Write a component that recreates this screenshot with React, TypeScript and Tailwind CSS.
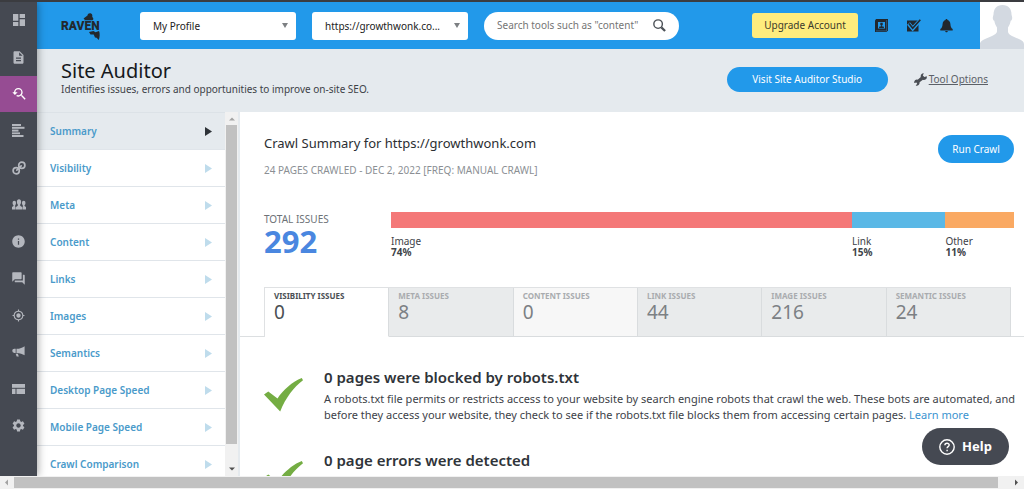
import React, { useState } from 'react';
import {
  MdDashboard,
  MdDescription,
  MdForum,
  MdGpsFixed,
  MdInfo,
  MdSettings,
  MdYoutubeSearchedFor,
} from 'react-icons/md';

const BarsIcon: React.FC = () => (
  <svg viewBox="0 0 13 13" className="w-[13px] h-[13px]" fill="currentColor">
    <rect x="0" y="0" width="9" height="2" />
    <rect x="0" y="2.8" width="12.5" height="2" />
    <rect x="0" y="5.6" width="6.5" height="2" />
    <rect x="0" y="8.4" width="8" height="1.8" />
    <rect x="0" y="11" width="11.5" height="2" />
  </svg>
);

const ChainIcon: React.FC = () => (
  <svg viewBox="0 0 14 14" className="w-[14px] h-[14px]" fill="none" stroke="currentColor" strokeWidth="1.7">
    <circle cx="9.8" cy="4.2" r="3.1" />
    <circle cx="4.2" cy="9.8" r="3.1" />
    <path d="M4.8 9.2l4.4-4.4" strokeLinecap="round" />
  </svg>
);

const PeopleIcon: React.FC = () => (
  <svg viewBox="0 0 14 11" className="w-[14px] h-[11px]" fill="currentColor">
    <ellipse cx="7" cy="3" rx="2.1" ry="2.8" />
    <ellipse cx="2.3" cy="4" rx="1.8" ry="2.3" />
    <ellipse cx="11.7" cy="4" rx="1.8" ry="2.3" />
    <path d="M3.6 10.5V8.3L5.8 6.8V5h2.4v1.8l2.2 1.5v2.2zM0 10.5V8l1.5-1V5.5h1.7v5zM14 10.5V8l-1.500-1V5.500h-1.700v5z" />
  </svg>
);

const MegaphoneIcon: React.FC = () => (
  <svg viewBox="0 0 13 12" className="w-[13px] h-[12px]" fill="currentColor">
    <path d="M4.5 2.8C8 2.8 10.5 1.6 12.6.2v9C10.5 7.9 8 6.9 4.5 6.9z" />
    <path d="M3.700 2.800v4.100H2.300A2 2 0 0 1 2.300 2.800zM3.600 7.700h2.200l1 2.900H4.700z" />
  </svg>
);

const PanelsIcon: React.FC = () => (
  <svg viewBox="0 0 13 10" className="w-[13px] h-[10px]" fill="currentColor">
    <rect width="13" height="3.8" />
    <rect y="4.8" width="3.5" height="5.2" />
    <rect x="4.5" y="4.8" width="8.5" height="5.2" />
  </svg>
);

const WrenchIcon: React.FC = () => (
  <svg viewBox="0 0 13 13" className="w-[13px] h-[13px]" fill="#4a4e54">
    <path d="M9.800.2L8.800 2.400l1.600 1.700 2.300-.9c.4 1.300 0 2.300-.8 3-.9.7-2 .9-3 .5L5.600 9.300c.1 1.200-.3 2-1 2.700-.9.800-1.900.9-2.900.5l1.500-1.700-.8-1.400L.3 10c-.3-1 0-2 .7-2.700.8-.7 1.700-.9 2.700-.6L6.800 4c-.3-1.100 0-2 .6-2.700.6-.8 1.500-1.200 2.400-1.100z" />
  </svg>
);

const rail = [
  { label: 'Dashboard', icon: <MdDashboard className="w-4 h-4" /> },
  { label: 'Reports', icon: <MdDescription className="w-[15px] h-[15px]" /> },
  { label: 'Research', icon: <MdYoutubeSearchedFor className="w-4 h-4" /> },
  { label: 'Rankings', icon: <BarsIcon /> },
  { label: 'Backlinks', icon: <ChainIcon /> },
  { label: 'Audience', icon: <PeopleIcon /> },
  { label: 'Metrics', icon: <MdInfo className="w-[15px] h-[15px]" /> },
  { label: 'Social', icon: <MdForum className="w-[15px] h-[15px]" /> },
  { label: 'Targeting', icon: <MdGpsFixed className="w-[13px] h-[13px]" /> },
  { label: 'Ads', icon: <MegaphoneIcon /> },
  { label: 'Content', icon: <PanelsIcon /> },
  { label: 'Settings', icon: <MdSettings className="w-[15px] h-[15px]" /> },
];

const sections = [
  'Summary',
  'Visibility',
  'Meta',
  'Content',
  'Links',
  'Images',
  'Semantics',
  'Desktop Page Speed',
  'Mobile Page Speed',
  'Crawl Comparison',
];

const breakdown = [
  { name: 'Image', percent: 74, color: 'bg-[#f47878]' },
  { name: 'Link', percent: 15, color: 'bg-[#5ab8e6]' },
  { name: 'Other', percent: 11, color: 'bg-[#faa962]' },
];

const tabs = [
  { name: 'Visibility Issues', count: 0 },
  { name: 'Meta Issues', count: 8 },
  { name: 'Content Issues', count: 0 },
  { name: 'Link Issues', count: 44 },
  { name: 'Image Issues', count: 216 },
  { name: 'Semantic Issues', count: 24 },
];

const RavenLogo: React.FC = () => (
  <a href="#" aria-label="Raven" className="relative flex items-center w-[39px] h-7 text-[#22282e]">
    <span className="font-['Roboto',sans-serif] text-[12px] leading-none font-black">RAVEN</span>
    <svg viewBox="0 0 39 28" className="absolute inset-0 w-[39px] h-7" fill="currentColor">
      <path d="M22.500 6.400l4-3C26.700 1.700 28 .9 29.500 1.200c1.500.4 2.200 1.900 1.700 3.300l1.300 2.500-1 1.300h-8.300c.6-.7.400-1.400-.7-1.900z" />
      <path d="M28 20l4.500-1 2 1.200 3.500-1.200c1 2 .9 6-.2 9l-2.200-2.200-1.600-.4-1.300-3-3.200.2z" />
    </svg>
  </a>
);

const CaretDown: React.FC = () => (
  <svg viewBox="0 0 6 5" className="absolute right-2 top-[11px] w-[6px] h-[5px] pointer-events-none" fill="#7d8083">
    <path d="M0 0h6L3 5z" />
  </svg>
);

const CheckMark: React.FC = () => (
  <svg viewBox="0 0 39 34" className="w-[39px] h-[34px] shrink-0" fill="#74ad43">
    <path d="M0 16.500L4.300 13.500 13.500 20.500C19 12 28.500 3.500 37.800 0L39 2.300C30 9 21.500 20 16.200 33.500Z" />
  </svg>
);

const Select: React.FC<{ label: string; value: string }> = ({ label, value }) => (
  <div className="relative w-[156px] h-7">
    <select
      aria-label={label}
      className="w-full h-full appearance-none rounded-[3px] bg-white pl-[13px] pr-5 text-[10px] text-[#222]"
    >
      <option>{value}</option>
    </select>
    <CaretDown />
  </div>
);

const Header: React.FC = () => (
  <header className="flex items-stretch h-[47px] bg-[#2299ea]">
    <div className="flex flex-1 items-center pl-6">
      <RavenLogo />
      <div className="flex items-center gap-4 ml-10">
        <Select label="Profile" value="My Profile" />
        <Select label="Website" value="https://growthwonk.co..." />
        <div className="flex items-center w-[195px] h-7 rounded-full bg-white pl-[13px] pr-[13px]">
          <input
            type="text"
            aria-label="Search tools"
            placeholder={'Search tools such as "content"'}
            className="flex-1 min-w-0 text-[10px] text-[#222] placeholder:text-[#757575] outline-none"
          />
          <svg viewBox="0 0 14 14" className="w-[13px] h-[13px]" fill="none" stroke="#4c5157">
            <circle cx="5.500" cy="5.500" r="4.600" strokeWidth="1.500" />
            <path d="M9 9l4 4" strokeWidth="2.400" />
          </svg>
        </div>
      </div>
      <div className="flex items-center ml-auto mr-[27px]">
        <button className="w-[106px] h-[25px] rounded-[3px] bg-[#ffec7d] text-[10px] text-[#3b3a2c]">
          Upgrade Account
        </button>
        <button aria-label="Contacts" className="ml-[17px]">
          <svg viewBox="0 0 13 13" className="w-[13px] h-[13px]">
            <path d="M0 1.200L1.200 0H13v11.500L11.500 13H0z" fill="#22282e" />
            <path d="M11.700 1v10.800M1 11.900h11" stroke="#2b79b3" strokeWidth=".6" fill="none" />
            <rect x="3" y="3" width="7" height="6.500" fill="#2299ea" />
            <path d="M5.300 3.700h2.400v2.500h-.8v1l2 .6v1.200H4.100V7.800l2-.6v-1h-.8z" fill="#22282e" />
          </svg>
        </button>
        <button aria-label="Tasks" className="ml-[19px]">
          <svg viewBox="0 0 14 13" className="w-[14px] h-[13px]">
            <rect x="0" y="1.500" width="11.500" height="11" fill="#22282e" />
            <path d="M1.500 4.500l4.200 5L13.500 1" stroke="#2299ea" strokeWidth="3.800" fill="none" />
            <path d="M2 4.500l3.700 4.700L13.300.8" stroke="#22282e" strokeWidth="1.700" fill="none" />
          </svg>
        </button>
        <button aria-label="Notifications" className="ml-[19px]">
          <svg viewBox="0 0 13 14" className="w-[13px] h-[14px]" fill="#22282e">
            <path d="M6.500 0c.7 0 1 .5 1 1 1.800.6 2.700 2 2.900 4 .2 2.600.6 4 2.300 5v1.500H.3V10c1.700-1 2.100-2.400 2.300-5 .2-2 1.100-3.400 2.900-4 0-.5.300-1 1-1zM5.200 12h2.600c0 1.800-2.600 1.800-2.600 0z" />
          </svg>
        </button>
      </div>
    </div>
    <button aria-label="Account" className="w-11 h-12 bg-white">
      <svg viewBox="0 0 44 48" className="w-11 h-12" fill="#d3d9e1">
        <path d="M22.500 3c6 0 9 4 9 9.500l.6 2.500c.3 2-.3 3.500-1.400 3.800-.5 3-1.500 5-2.700 6.700v4c0 2 1.500 3 4 4.500l8 3.500c2.500 1.200 4 2.500 4 5v5.500H0v-7c1-2 2.500-2.800 4.500-3.800l7.500-3.200c2.500-1.300 5-2.500 5-4.500v-4c-1.200-1.700-2.200-3.700-2.700-6.700-1.100-.3-1.700-1.800-1.400-3.800l.6-2.500C13.500 7 16.500 3 22.500 3z" />
      </svg>
    </button>
  </header>
);

export default function App() {
  const [section, setSection] = useState('Summary');
  const [tab, setTab] = useState('Visibility Issues');

  return (
    <div className="flex flex-col h-screen overflow-hidden border-t-2 border-[#3b3c40] bg-white font-['Noto_Sans',sans-serif] text-[#3d4248]">
      <div className="flex flex-1 min-h-0">
        {/* Icon rail */}
        <nav aria-label="Tools" className="z-10 flex flex-col w-[37px] shrink-0 pb-8 bg-[#454952] shadow-[1px_0_8px_rgba(0,0,0,0.35)]">
          {rail.map(({ label, icon }) => (
            <a
              key={label}
              href="#"
              aria-label={label}
              className={`flex flex-1 items-center justify-center ${
                label === 'Research' ? 'bg-[#964c93] text-white' : 'text-[#b4b7be]'
              }`}
            >
              {icon}
            </a>
          ))}
        </nav>

        <div className="flex flex-col flex-1 min-w-0">
          <Header />

          {/* Page title */}
          <div className="flex items-start justify-between h-[63px] shrink-0 bg-[#e5eaee] pl-6 pr-9 pt-[10px]">
            <div>
              <h1 className="text-[20px] leading-6 text-[#16191c]">Site Auditor</h1>
              <p className="text-[10px] leading-3">
                Identifies issues, errors and opportunities to improve on-site SEO.
              </p>
            </div>
            <div className="flex items-center mt-2">
              <button className="w-[161px] h-[25px] rounded-full bg-[#2299ea] text-[10px] text-white">
                Visit Site Auditor Studio
              </button>
              <a href="#" className="flex items-center gap-[2px] ml-[26px] text-[10px] text-[#5b6067] underline">
                <WrenchIcon />
                Tool Options
              </a>
            </div>
          </div>

          <div className="flex flex-1 min-h-0">
            {/* Section list */}
            <div className="flex w-[203px] shrink-0 border-r-2 border-[#e5eaee]">
              <ul className="flex-1 overflow-hidden border-t border-[#dce2e7]">
                {sections.map((name) => (
                  <li key={name}>
                    <button
                      onClick={() => setSection(name)}
                      className={`flex items-center justify-between w-full h-[37px] pl-[13px] pr-[13px] border-b border-[#e0e5ea] text-[10px] font-semibold text-[#4a9aca] ${
                        name === section ? 'bg-[#e5eaee]' : ''
                      }`}
                    >
                      {name}
                      <svg
                        viewBox="0 0 7 9"
                        className={`w-[7px] h-[9px] ${name === section ? 'text-[#2e3338]' : 'text-[#bfdcec]'}`}
                        fill="currentColor"
                      >
                        <path d="M0 0l7 4.500L0 9z" />
                      </svg>
                    </button>
                  </li>
                ))}
              </ul>
              <div className="flex flex-col items-center w-[13px] bg-[#f1f1f1]">
                <svg viewBox="0 0 13 13" className="w-[13px] h-[13px] shrink-0" fill="#a3a3a3">
                  <path d="M4 8.500h6L7 5.500z" />
                </svg>
                <div className="flex-1 w-[11px] bg-[#c1c1c1]" />
                <svg viewBox="0 0 13 32" className="w-[13px] h-8 shrink-0" fill="#505050">
                  <path d="M4 23.500h6L7 26.500z" />
                </svg>
              </div>
            </div>

            {/* Crawl summary */}
            <main className="flex-1 min-w-0 overflow-hidden">
              <div className="flex items-start justify-between pl-6 pr-[10px] pt-[23px]">
                <div>
                  <h2 className="text-[13px] leading-4 text-[#2b2e32]">
                    Crawl Summary for https://growthwonk.com
                  </h2>
                  <p className="mt-[13px] text-[10px] leading-3 uppercase text-[#8b8f94]">
                    24 pages crawled - Dec 2, 2022 [Freq: Manual crawl]
                  </p>
                </div>
                <button className="w-[76px] h-7 rounded-full bg-[#2299ea] text-[10px] text-white">
                  Run Crawl
                </button>
              </div>

              <div className="flex pl-6 pr-[10px] mt-9">
                <div className="w-[127px] shrink-0">
                  <p className="pt-px text-[10px] leading-3 uppercase text-[#6d7277]">Total Issues</p>
                  <p className="text-[31px] leading-8 font-bold text-[#4a87e0]">292</p>
                </div>
                <div className="flex flex-1">
                  {breakdown.map(({ name, percent, color }) => (
                    <div key={name} style={{ width: `${percent}%` }}>
                      <div className={`h-4 ${color}`} />
                      <p className="mt-[7px] text-[10px] leading-3">{name}</p>
                      <p className="text-[10px] leading-[11px] font-bold">{percent}%</p>
                    </div>
                  ))}
                </div>
              </div>

              <div className="mt-[29px] pl-6 pr-[13px] border-b border-[#dcdfe1]">
                <div role="tablist" className="grid grid-cols-6 -mb-px border-t border-l border-[#dfe1e3]">
                  {tabs.map(({ name, count }) => (
                    <button
                      key={name}
                      role="tab"
                      aria-selected={name === tab}
                      onClick={() => setTab(name)}
                      className={`flex flex-col h-[49px] pl-[9px] pt-[3px] text-left border-r border-b border-[#d9dcde] ${
                        name === tab
                          ? 'bg-white border-b-white text-[#4a4f54]'
                          : count === 0
                            ? 'bg-[#f7f7f7] text-[#7c8084]'
                            : 'bg-[#e9ebec] text-[#7c8084]'
                      }`}
                    >
                      <span className={`text-[8px] leading-[10px] font-bold uppercase ${name === tab ? '' : 'text-[#a9acaf]'}`}>
                        {name}
                      </span>
                      <span className="text-[19px] leading-[22px]">{count}</span>
                    </button>
                  ))}
                </div>
              </div>

              <div className="pl-6 pr-[6px] pt-[30px]">
                <section className="flex items-start gap-[21px] h-[83px]">
                  <div className="pt-[11px]"><CheckMark /></div>
                  <div>
                    <h3 className="text-[15px] leading-5 font-semibold text-[#2f3439]">
                      0 pages were blocked by robots.txt
                    </h3>
                    <p className="mt-1 text-[11px] leading-4">
                      A robots.txt file permits or restricts access to your website by search engine robots that crawl the web. These bots are automated, and before they access your website, they check to see if the robots.txt file blocks them from accessing certain pages.{' '}
                      <a href="#" className="text-[#3a93cf]">Learn more</a>
                    </p>
                  </div>
                </section>
                <section className="flex items-start gap-[21px]">
                  <div className="pt-[11px]"><CheckMark /></div>
                  <h3 className="text-[15px] leading-5 font-semibold text-[#2f3439]">
                    0 page errors were detected
                  </h3>
                </section>
              </div>
            </main>
          </div>
        </div>
      </div>

      {/* Horizontal scroll track */}
      <div className="z-20 flex items-center h-[13px] shrink-0 bg-[#f1f1f1]">
        <svg viewBox="0 0 14 13" className="w-[14px] h-[13px]" fill="#a3a3a3">
          <path d="M8 3.500v6l-3-3z" />
        </svg>
        <div className="flex-1 h-[11px] bg-[#c1c1c1]" />
        <svg viewBox="0 0 26 13" className="w-[26px] h-[13px]" fill="#505050">
          <path d="M17 3.500v6l3-3z" />
        </svg>
      </div>

      <button className="fixed right-[15px] bottom-6 z-30 flex items-center justify-center gap-[7px] w-[87px] h-[37px] rounded-full bg-[#454952] text-[13px] font-bold text-white">
        <svg viewBox="0 0 16 16" className="w-4 h-4" fill="none" stroke="currentColor" strokeWidth="1.400">
          <circle cx="8" cy="8" r="7.200" />
          <path d="M5.900 6.300c0-2.800 4.300-2.700 4.300-.2 0 1.500-2.100 1.600-2.100 3.200M8.100 10.800v1.500" />
        </svg>
        Help
      </button>
    </div>
  );
}
